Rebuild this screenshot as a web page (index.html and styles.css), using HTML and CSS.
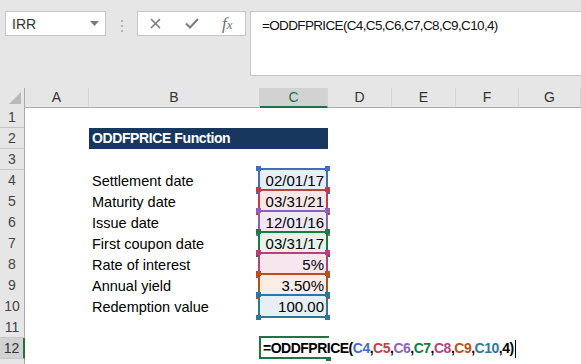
FILE: index.html
```html
<!doctype html>
<html lang="en">
<head>
	<meta charset="UTF-8">
	<title>ODDFPRICE</title>
	<link rel="stylesheet" href="styles.css">
</head>
<body>
	<div class="toolbar">
		<div class="namebox">
			<span>IRR</span>
			<svg width="9" height="5" viewBox="0 0 9 5"><path d="M0 0H9L4.5 5Z" fill="#7a7a7a"/></svg>
		</div>
		<div class="grip">
			<svg width="3" height="13" viewBox="0 0 3 13"><rect x="0" y="0" width="2" height="2" fill="#b5b5b5"/><rect x="0" y="5" width="2" height="2" fill="#b5b5b5"/><rect x="0" y="10" width="2" height="2" fill="#b5b5b5"/></svg>
		</div>
		<div class="btns">
			<span class="slot"><svg width="11" height="11" viewBox="0 0 11 11"><path d="M1 1L10 10M10 1L1 10" stroke="#7b7b7b" stroke-width="1.6"/></svg></span>
			<span class="slot"><svg width="14" height="11" viewBox="0 0 14 11"><path d="M1 5.5L5 9.5L13 1" stroke="#7b7b7b" stroke-width="2" fill="none"/></svg></span>
			<span class="slot fx">f<span>x</span></span>
		</div>
		<div class="fbar">=ODDFPRICE(C4,C5,C6,C7,C8,C9,C10,4)</div>
	</div>

	<div class="sheet">
		<div class="row hdr">
			<div class="corner"><svg width="12" height="12" viewBox="0 0 12 12"><path d="M12 0V12H0Z" fill="#b9b9b9"/></svg></div>
			<div class="ch">A</div>
			<div class="ch">B</div>
			<div class="ch sel">C</div>
			<div class="ch">D</div>
			<div class="ch">E</div>
			<div class="ch">F</div>
			<div class="ch">G</div>
		</div>
		<div class="row"><div class="rh">1</div></div>
		<div class="row"><div class="rh">2</div><div class="title">ODDFPRICE Function</div></div>
		<div class="row"><div class="rh">3</div></div>
		<div class="row">
			<div class="rh">4</div><div class="lbl">Settlement date</div>
			<div class="val c4">02/01/17<span class="ref"><i class="tl"></i><i class="tr"></i><i class="bl"></i><i class="br"></i></span></div>
		</div>
		<div class="row">
			<div class="rh">5</div><div class="lbl">Maturity date</div>
			<div class="val c5">03/31/21<span class="ref"><i class="tl"></i><i class="tr"></i><i class="bl"></i><i class="br"></i></span></div>
		</div>
		<div class="row">
			<div class="rh">6</div><div class="lbl">Issue date</div>
			<div class="val c6">12/01/16<span class="ref"><i class="tl"></i><i class="tr"></i><i class="bl"></i><i class="br"></i></span></div>
		</div>
		<div class="row">
			<div class="rh">7</div><div class="lbl">First coupon date</div>
			<div class="val c7">03/31/17<span class="ref"><i class="tl"></i><i class="tr"></i><i class="bl"></i><i class="br"></i></span></div>
		</div>
		<div class="row">
			<div class="rh">8</div><div class="lbl">Rate of interest</div>
			<div class="val c8">5%<span class="ref"><i class="tl"></i><i class="tr"></i><i class="bl"></i><i class="br"></i></span></div>
		</div>
		<div class="row">
			<div class="rh">9</div><div class="lbl">Annual yield</div>
			<div class="val c9">3.50%<span class="ref"><i class="tl"></i><i class="tr"></i><i class="bl"></i><i class="br"></i></span></div>
		</div>
		<div class="row">
			<div class="rh">10</div><div class="lbl">Redemption value</div>
			<div class="val c10">100.00<span class="ref"><i class="tl"></i><i class="tr"></i><i class="bl"></i><i class="br"></i></span></div>
		</div>
		<div class="row"><div class="rh">11</div></div>
		<div class="row">
			<div class="rh sel">12</div>
			<div class="edit">
				<span class="ebox"><i></i></span>
				<span class="ftext">=ODDFPRICE(<b class="k4">C4</b>,<b class="k5">C5</b>,<b class="k6">C6</b>,<b class="k7">C7</b>,<b class="k8">C8</b>,<b class="k9">C9</b>,<b class="k10">C10</b>,4)<span class="caret"></span></span>
			</div>
		</div>
		<div class="row"><div class="rh"></div></div>
	</div>
</body>
</html>
```

FILE: styles.css
```css
body{
	margin: 0;
	width: 581px;
	height: 364px;
	overflow: hidden;
	background: #fff;
	font-family: "Liberation Sans", Arial, sans-serif;
}
.toolbar{
	height: 88px;
	box-sizing: border-box;
	padding: 11px 0 0 5px;
	background: #e6e6e6;
	display: flex;
	align-items: flex-start;
}
.namebox{
	width: 101px;
	height: 25px;
	box-sizing: border-box;
	background: #fff;
	border: 1px solid #c6c6c6;
	display: flex;
	align-items: center;
	justify-content: space-between;
	padding: 0 6px 0 6px;
	font-size: 14px;
	color: #333;
}
.grip{
	margin: 8px 0 0 15px;
	width: 3px;
}
.btns{
	margin-left: 13px;
	width: 109px;
	height: 25px;
	box-sizing: border-box;
	background: #fff;
	border: 1px solid #c6c6c6;
	display: flex;
}
.slot{
	width: 36px;
	display: flex;
	align-items: center;
	justify-content: center;
}
.fx{
	font-family: "Liberation Serif", serif;
	font-style: italic;
	font-size: 17px;
	color: #6e6e6e;
}
.fx span{
	font-size: 13px;
	margin-top: 3px;
}
.fbar{
	margin-left: 4px;
	flex: 1;
	height: 65px;
	box-sizing: border-box;
	background: #fff;
	border: 1px solid #c6c6c6;
	border-right: 0;
	padding: 6px 11px;
	font-size: 13.5px;
	letter-spacing: -0.65px;
	line-height: 16px;
	color: #111;
}
.row{
	display: grid;
	grid-template-columns: 25px 64px 171px 68px 64px 64px 63px 62px;
	height: 21px;
}
.hdr{
	height: 19px;
	background: #e6e6e6;
}
.corner{
	box-sizing: border-box;
	border-right: 1px solid #ababab;
	border-bottom: 1px solid #ababab;
	display: flex;
	align-items: flex-end;
	justify-content: flex-end;
	padding: 0 3px 3px 0;
}
.ch{
	box-sizing: border-box;
	border-right: 1px solid #d4d4d4;
	border-bottom: 1px solid #ababab;
	text-align: center;
	font-size: 14px;
	line-height: 18px;
	color: #333;
}
.ch.sel{
	background: #d2d2d2;
	border-bottom: 2px solid #217346;
	color: #217346;
}
.rh{
	grid-column: 1;
	box-sizing: border-box;
	background: #e6e6e6;
	border-right: 1px solid #ababab;
	border-bottom: 1px solid #c6c6c6;
	text-align: center;
	font-size: 14px;
	line-height: 20px;
	color: #444;
}
.rh.sel{
	background: #d2d2d2;
	border-right: 2px solid #217346;
	color: #333;
}
.title{
	grid-column: 3 / span 2;
	background: #17375e;
	color: #fff;
	font-weight: bold;
	font-size: 14px;
	letter-spacing: -0.4px;
	line-height: 21px;
	padding-left: 3px;
}
.lbl{
	grid-column: 3;
	padding-left: 3px;
	font-size: 14.5px;
	line-height: 22px;
	color: #000;
}
.val{
	grid-column: 4;
	position: relative;
	text-align: right;
	padding-right: 4px;
	font-size: 15px;
	line-height: 22px;
	color: #000;
}
.ref{
	position: absolute;
	top: -2px;
	left: -2px;
	right: 0;
	bottom: 0;
	border: 2px solid var(--c);
}
.ref i{
	position: absolute;
	width: 5px;
	height: 5px;
	background: var(--c);
}
.ref .tl{ top: -4px; left: -4px; }
.ref .tr{ top: -4px; right: -4px; }
.ref .bl{ bottom: -4px; left: -4px; }
.ref .br{ bottom: -4px; right: -4px; }
.c4{ --c: #3c6ec4; background: #e8eef8; }
.c5{ --c: #c43c44; background: #f9e7e8; }
.c6{ --c: #8a62b8; background: #efe9f5; }
.c7{ --c: #10803c; background: #e6f2e9; }
.c8{ --c: #b4417e; background: #f6e7ee; }
.c9{ --c: #b85214; background: #fbede4; }
.c10{ --c: #2f7895; background: #e6eff3; }
.edit{
	grid-column: 4;
	position: relative;
}
.ebox{
	position: absolute;
	top: -2px;
	left: -1px;
	right: -1px;
	bottom: 0;
	border: 2px solid #217346;
	border-right: 0;
}
.ebox i{
	position: absolute;
	right: -2px;
	bottom: -4px;
	width: 5px;
	height: 4px;
	background: #217346;
}
.ftext{
	position: relative;
	display: block;
	white-space: nowrap;
	padding-left: 3px;
	font-weight: bold;
	font-size: 14px;
	letter-spacing: -0.5px;
	line-height: 20px;
	color: #000;
}
.ftext b{ font-weight: bold; }
.k4{ color: #3c6ec4; }
.k5{ color: #c43c44; }
.k6{ color: #8a62b8; }
.k7{ color: #10803c; }
.k8{ color: #b4417e; }
.k9{ color: #b85214; }
.k10{ color: #2f7895; }
.caret{
	display: inline-block;
	width: 1px;
	height: 18px;
	background: #000;
	margin-left: 1px;
	vertical-align: middle;
}
```
